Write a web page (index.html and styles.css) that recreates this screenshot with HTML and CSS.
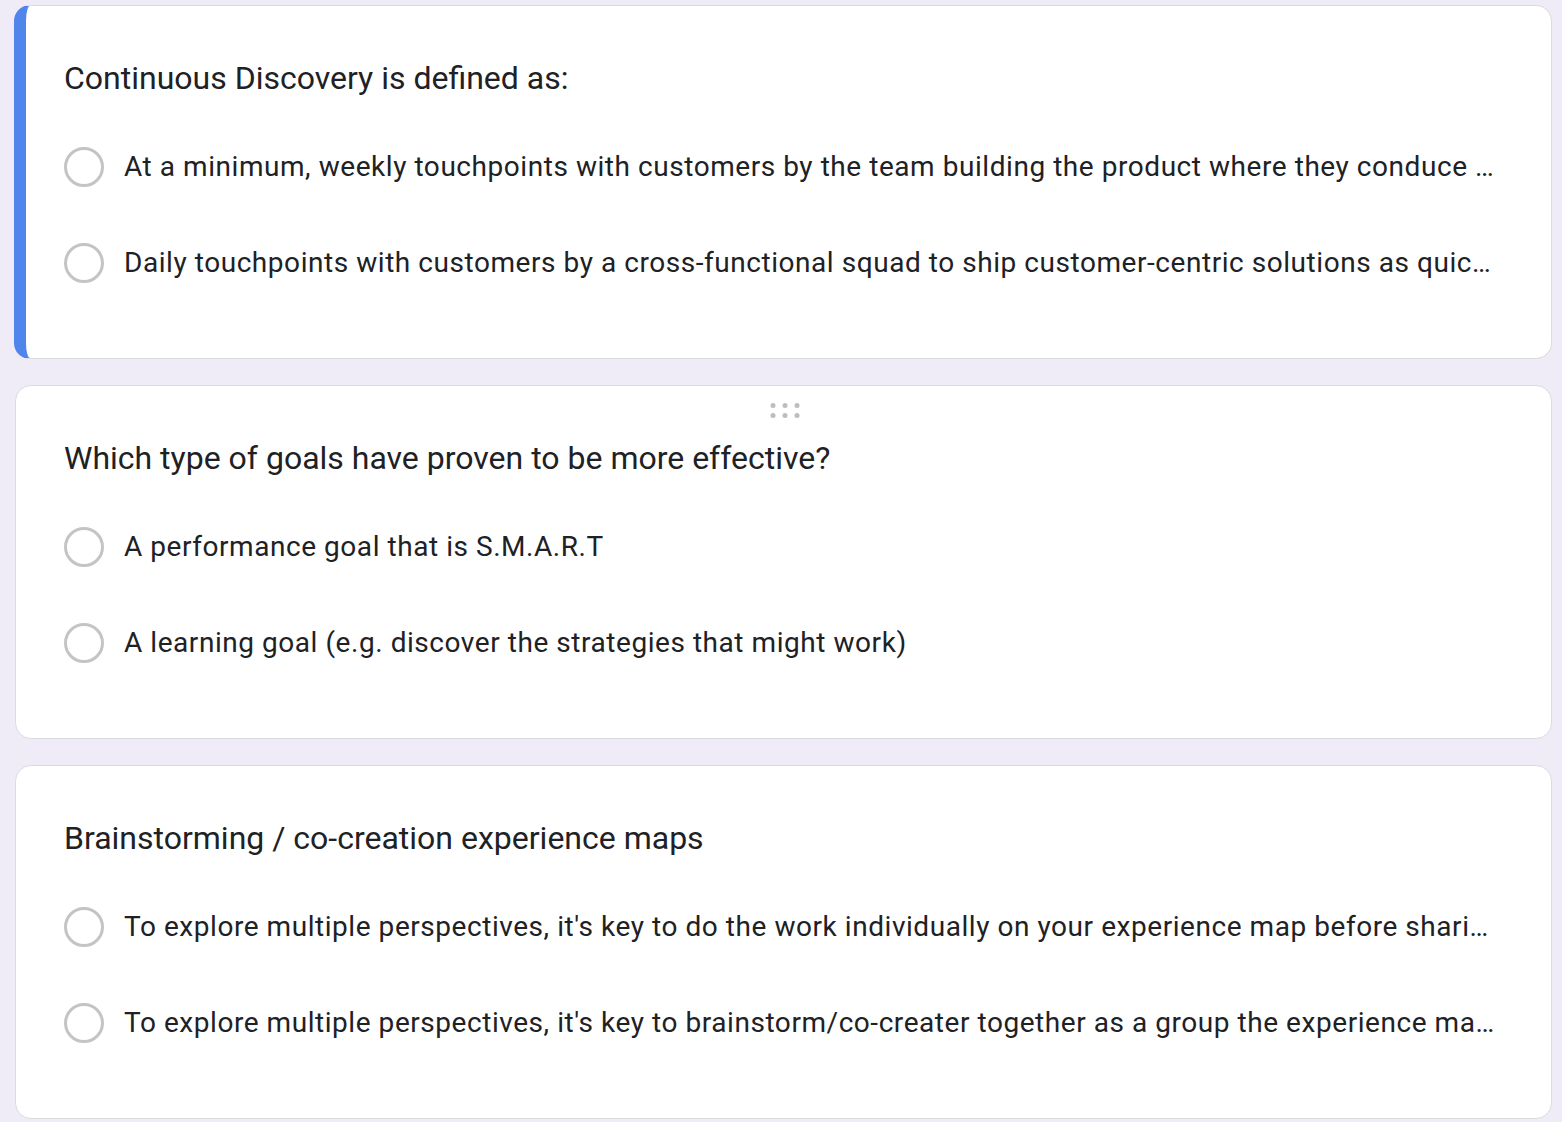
FILE: index.html
```html
<!DOCTYPE html>
<html>
<head>
<meta charset="utf-8">
<link rel="stylesheet" href="styles.css">
</head>
<body>
<main class="list">
  <section class="card card-active">
    <h2 class="title">Continuous Discovery is defined as:</h2>
    <div class="options">
      <label class="option"><span class="radio"></span><span class="label">At a minimum, weekly touchpoints with customers by the team building the product where they conduce small research activities in pursuit of a desired outcome</span></label>
      <label class="option"><span class="radio"></span><span class="label">Daily touchpoints with customers by a cross-functional squad to ship customer-centric solutions as quickly as possible</span></label>
    </div>
  </section>
  <section class="card">
    <div class="drag"><span></span><span></span><span></span><span></span><span></span><span></span></div>
    <h2 class="title">Which type of goals have proven to be more effective?</h2>
    <div class="options">
      <label class="option"><span class="radio"></span><span class="label">A performance goal that is S.M.A.R.T</span></label>
      <label class="option"><span class="radio"></span><span class="label">A learning goal (e.g. discover the strategies that might work)</span></label>
    </div>
  </section>
  <section class="card">
    <h2 class="title">Brainstorming / co-creation experience maps</h2>
    <div class="options">
      <label class="option"><span class="radio"></span><span class="label">To explore multiple perspectives, it's key to do the work individually on your experience map before sharing it with the rest of the group</span></label>
      <label class="option"><span class="radio"></span><span class="label">To explore multiple perspectives, it's key to brainstorm/co-creater together as a group the experience map from the start</span></label>
    </div>
  </section>
</main>
</body>
</html>
```
FILE: styles.css
```css
* { box-sizing: border-box; }
html, body { margin: 0; height: 100%; }
body {
  background: #efebf7;
  font-family: Roboto, "Noto Sans", Arial, sans-serif;
  color: #202124;
  overflow: hidden;
}
.list {
  display: flex;
  flex-direction: column;
  gap: 26px;
  padding: 5px 10px 0 15px;
}
.card {
  position: relative;
  background: #fff;
  border: 1px solid #dadce0;
  border-radius: 16px;
  height: 354px;
  padding: 52px 52px 0 48px;
}
.card-active {
  border-left: 12px solid #5086ec;
  margin-left: -1px;
  padding-left: 38px;
}
.title {
  margin: 0;
  font-weight: 400;
  font-size: 32px;
  line-height: 40px;
  letter-spacing: 0;
}
.options {
  margin-top: 21px;
  display: flex;
  flex-direction: column;
}
.option {
  height: 96px;
  display: flex;
  align-items: center;
  gap: 20px;
}
.radio {
  flex: none;
  width: 40px;
  height: 40px;
  border: 3px solid #c4c4c4;
  border-radius: 50%;
}
.label {
  font-size: 28px;
  line-height: 40px;
  white-space: nowrap;
  overflow: hidden;
  text-overflow: ellipsis;
  letter-spacing: 0.55px;
}
.drag {
  position: absolute;
  top: 17px;
  left: 50%;
  transform: translateX(-50%);
  display: grid;
  grid-template-columns: repeat(3, 5px);
  gap: 5px 7px;
  margin-left: 1px;
}
.drag span {
  width: 5px;
  height: 5px;
  border-radius: 50%;
  background: #bdbdbd;
}
```
